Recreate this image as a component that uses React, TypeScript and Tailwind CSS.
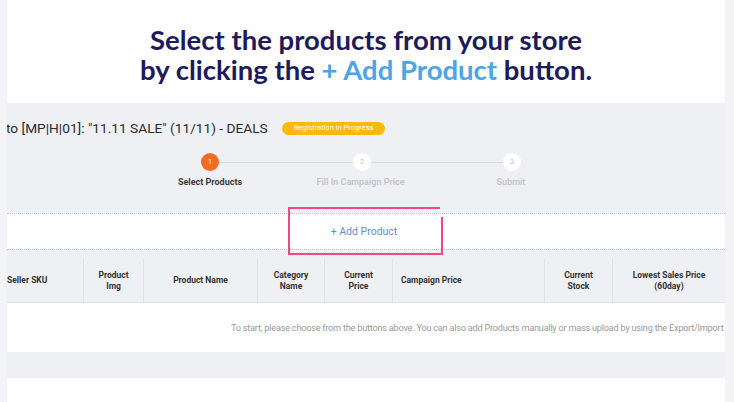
import React from "react";

const cols = [
  { w: 76, label: ["Seller SKU"], align: "left" },
  { w: 60, label: ["Product", "Img"] },
  { w: 114, label: ["Product Name"] },
  { w: 67, label: ["Category", "Name"] },
  { w: 68, label: ["Current", "Price"] },
  { w: 152, label: ["Campaign Price"], align: "left" },
  { w: 68, label: ["Current", "Stock"] },
  { w: 113, label: ["Lowest Sales Price", "(60day)"] },
];

export default function App() {
  return (
    <div className="w-[734px] h-[402px] overflow-hidden bg-[#f4f4f6] flex" style={{ fontFamily: "Roboto, 'Liberation Sans', sans-serif" }}>
      <div className="ml-[7px] w-[718px] h-full flex flex-col overflow-hidden">
        {/* Header */}
        <div className="h-[103px] bg-white flex flex-col items-center pt-[25px] text-[27.5px] leading-[30px] font-bold text-[#1d1a5e]" style={{ fontFamily: "Lato, 'Open Sans', sans-serif" }}>
          <div>Select the products from your store</div>
          <div>
            by clicking the <span className="text-[#4aa5ea]">+ Add Product</span> button.
          </div>
        </div>

        {/* Gray campaign area */}
        <div className="bg-[#eff0f4] h-[110px] flex flex-col">
          <div className="flex items-center h-[30px] mt-[10px]">
            <span className="text-[13.7px] text-[#2b2b2b] whitespace-nowrap -ml-[1px]">to [MP|H|01]: "11.11 SALE" (11/11) - DEALS</span>
            <span className="ml-[14px] bg-[#fbb80f] text-white text-[7.5px] rounded-full px-[12px] h-[13px] flex items-center whitespace-nowrap">Registration in Progress</span>
          </div>
          <div className="flex items-center ml-[194px] mt-[10px] h-[18px]">
            <div className="w-[18px] h-[18px] rounded-full bg-[#f26b21] text-white text-[8px] flex items-center justify-center">1</div>
            <div className="w-[134px] h-px bg-[#d8d9de]" />
            <div className="w-[18px] h-[18px] rounded-full bg-white text-[#c8c8c8] text-[8px] flex items-center justify-center">2</div>
            <div className="w-[132px] h-px bg-[#d8d9de]" />
            <div className="w-[18px] h-[18px] rounded-full bg-white text-[#c8c8c8] text-[8px] flex items-center justify-center">3</div>
          </div>
          <div className="flex ml-[128px] mt-[5px] text-[9px] font-bold">
            <div className="w-[150px] text-center text-[#3a3a3a]">Select Products</div>
            <div className="w-[151px] text-center text-[#c4c4c8] font-semibold">Fill In Campaign Price</div>
            <div className="w-[150px] text-center text-[#c4c4c8] font-semibold">Submit</div>
          </div>
        </div>

        {/* Add product band */}
        <div className="relative bg-white h-[37px] border-y border-dotted border-[#b4c0da] flex items-center justify-center">
          <span className="text-[10.5px] text-[#5e8fd6] -ml-[4px]">+ Add Product</span>
          <div className="absolute left-[281px] top-[-7px] w-[152px] h-[2px] bg-[#ec4a7e]" />
          <div className="absolute left-[281px] top-[-7px] w-[2px] h-[48px] bg-[#ec4a7e]" />
          <div className="absolute left-[281px] top-[39px] w-[155px] h-[2px] bg-[#ec4a7e]" />
          <div className="absolute left-[434px] top-[3px] w-[2px] h-[38px] bg-[#ec4a7e]" />
        </div>

        {/* table header */}
        <div className="bg-[#eff0f4] pt-[9px]">
          <div className="flex h-[44px] border-b border-[#e3e4e8]">
            {cols.map((c, i) => (
              <div
                key={i}
                className={`h-full flex flex-col justify-center text-[8.5px] leading-[11px] font-bold text-[#333] ${i > 0 ? "border-l border-[#e0e1e5]" : ""} ${c.align === "left" ? "items-start pl-[8px]" : "items-center text-center"}`}
                style={{ width: c.w, paddingLeft: i === 0 ? 0 : undefined }}
              >
                {c.label.map((l, j) => (
                  <div key={j} className="whitespace-nowrap">{l}</div>
                ))}
              </div>
            ))}
          </div>
        </div>

        {/* empty row */}
        <div className="bg-white h-[49px] flex items-center overflow-hidden">
          <span className="ml-[224px] whitespace-nowrap text-[9.2px] text-[#9a9a9a] tracking-[-0.24px]">
            To start, please choose from the buttons above. You can also add Products manually or mass upload by using the Export/Import
          </span>
        </div>
        <div className="bg-[#eff0f4] h-[26px]" />
        <div className="bg-white flex-1" />
      </div>
    </div>
  );
}
